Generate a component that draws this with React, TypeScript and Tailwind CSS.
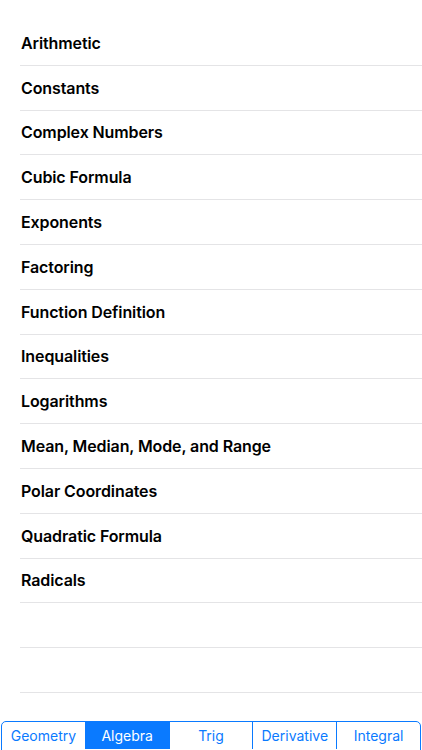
import React from "react";

const topics = [
  "Arithmetic",
  "Constants",
  "Complex Numbers",
  "Cubic Formula",
  "Exponents",
  "Factoring",
  "Function Definition",
  "Inequalities",
  "Logarithms",
  "Mean, Median, Mode, and Range",
  "Polar Coordinates",
  "Quadratic Formula",
  "Radicals",
  "",
  "",
];

const tabs = ["Geometry", "Algebra", "Trig", "Derivative", "Integral"];

export default function App() {
  return (
    <div
      className="flex h-[750px] w-[422px] flex-col overflow-hidden bg-white"
      style={{ fontFamily: "Inter, 'Noto Sans', sans-serif" }}
    >
      <ul className="pt-[21px]">
        {topics.map((t, i) => (
          <li key={i} className="ml-[20px] flex h-[44.8px] items-center border-b border-[#e4e4e6] pl-[1px]">
            <span className="text-[16px] font-semibold tracking-[-0.1px] text-black">{t}</span>
          </li>
        ))}
      </ul>
      <div className="mt-auto px-[1px]">
        <div className="flex h-[30px] translate-y-[1px] overflow-hidden rounded-t-[5px] border border-[#0a7aff] pb-[1px]">
          {tabs.map((t, i) => (
            <div
              key={t}
              className={
                "flex flex-1 items-center justify-center text-[14px] " +
                (i > 0 ? "border-l border-[#0a7aff] " : "") +
                (t === "Algebra" ? "bg-[#0a7aff] text-white" : "text-[#0a7aff]")
              }
            >
              {t}
            </div>
          ))}
        </div>
      </div>
    </div>
  );
}
